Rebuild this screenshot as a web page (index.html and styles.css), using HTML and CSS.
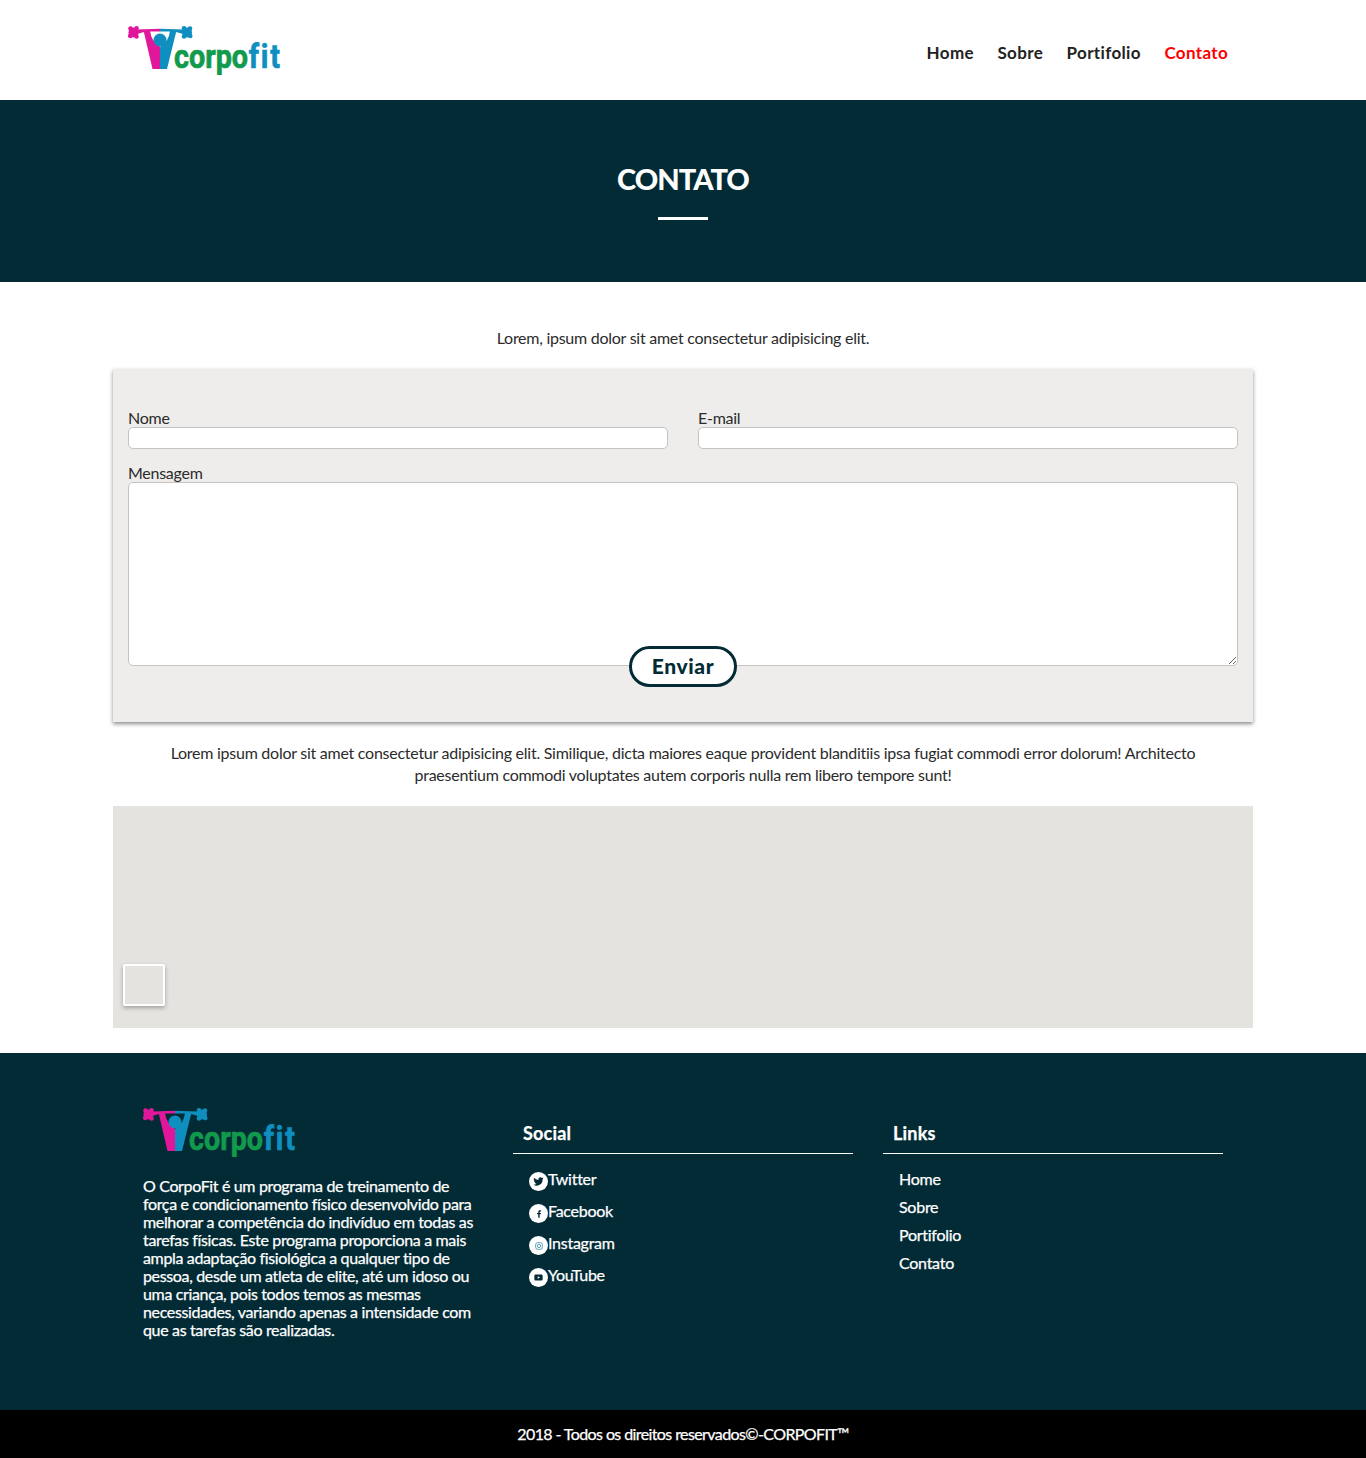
FILE: index.html
```html
<!DOCTYPE html>
<html lang="pt-BR">
<head>
    <meta charset="UTF-8">
    <meta name="viewport" content="width=device-width, initial-scale=1.0">
    <link rel="stylesheet" href="styles.css">
    <title>CorpoFit - Contato</title>
</head>
<body>
    <header class="topbar">
        <div class="topbar__inner">
            <svg class="logo" viewBox="0 0 170 50" width="170" height="50">
                <g class="logo__pink">
                    <circle cx="5.500" cy="7.500" r="5"/><circle cx="2.500" cy="3.500" r="2.300"/><circle cx="8.500" cy="3.300" r="2.300"/><circle cx="2.200" cy="11" r="2.300"/><circle cx="8.500" cy="11.500" r="2.300"/>
                    <path d="M9 4.500L32 3.800v2.700H22l-6 .5-7 2z"/>
                    <path d="M15.500 5.500h6.500q1 11 10.500 16.500v22h-8z"/>
                </g>
                <g class="logo__blue">
                    <circle cx="59" cy="7.500" r="5"/><circle cx="56" cy="3.300" r="2.300"/><circle cx="62" cy="3.500" r="2.300"/><circle cx="62.300" cy="11" r="2.300"/><circle cx="56" cy="11.500" r="2.300"/>
                    <path d="M55 4.500L32 3.800v2.700h10l6 .5 7 2z"/>
                    <path d="M48.500 5.500H42Q41 16.500 32 22v22h7z"/>
                    <circle cx="32" cy="15" r="6.500"/>
                </g>
                <g transform="translate(46 43) scale(.87 1)">
                    <text class="logo__text logo__green" x="0" y="0">corpo</text>
                    <text class="logo__text logo__fit logo__blue" x="86" y="0">fit</text>
                </g>
            </svg>
            <nav class="nav">
                <a href="#">Home</a>
                <a href="#">Sobre</a>
                <a href="#">Portifolio</a>
                <a href="#" class="nav__active">Contato</a>
            </nav>
        </div>
    </header>

    <section class="hero">
        <h1>CONTATO</h1>
        <div class="hero__line"></div>
    </section>

    <main class="container">
        <p class="intro">Lorem, ipsum dolor sit amet consectetur adipisicing elit.</p>

        <form class="contact">
            <div class="contact__row">
                <div class="field">
                    <label for="nome">Nome</label>
                    <input type="text" id="nome">
                </div>
                <div class="field">
                    <label for="email">E-mail</label>
                    <input type="email" id="email">
                </div>
            </div>
            <div class="field">
                <label for="mensagem">Mensagem</label>
                <textarea id="mensagem"></textarea>
            </div>
            <button type="button" class="send">Enviar</button>
        </form>

        <p class="outro">Lorem ipsum dolor sit amet consectetur adipisicing elit. Similique, dicta maiores eaque provident blanditiis ipsa fugiat commodi error dolorum! Architecto praesentium commodi voluptates autem corporis nulla rem libero tempore sunt!</p>

        <div class="map">
            <div class="map__control"></div>
        </div>
    </main>

    <footer class="footer">
        <div class="footer__inner">
            <div class="footer__col">
                <svg class="logo" viewBox="0 0 170 50" width="170" height="50">
                    <g class="logo__pink">
                        <circle cx="5.500" cy="7.500" r="5"/><circle cx="2.500" cy="3.500" r="2.300"/><circle cx="8.500" cy="3.300" r="2.300"/><circle cx="2.200" cy="11" r="2.300"/><circle cx="8.500" cy="11.500" r="2.300"/>
                        <path d="M9 4.500L32 3.800v2.700H22l-6 .5-7 2z"/>
                        <path d="M15.500 5.500h6.500q1 11 10.500 16.500v22h-8z"/>
                    </g>
                    <g class="logo__blue">
                        <circle cx="59" cy="7.500" r="5"/><circle cx="56" cy="3.300" r="2.300"/><circle cx="62" cy="3.500" r="2.300"/><circle cx="62.300" cy="11" r="2.300"/><circle cx="56" cy="11.500" r="2.300"/>
                        <path d="M55 4.500L32 3.800v2.700h10l6 .5 7 2z"/>
                        <path d="M48.500 5.500H42Q41 16.500 32 22v22h7z"/>
                        <circle cx="32" cy="15" r="6.500"/>
                    </g>
                    <g transform="translate(46 43) scale(.87 1)">
                        <text class="logo__text logo__green" x="0" y="0">corpo</text>
                        <text class="logo__text logo__fit logo__blue" x="86" y="0">fit</text>
                    </g>
                </svg>
                <p class="footer__about">O CorpoFit é um programa de treinamento de força e condicionamento físico desenvolvido para melhorar a competência do indivíduo em todas as tarefas físicas. Este programa proporciona a mais ampla adaptação fisiológica a qualquer tipo de pessoa, desde um atleta de elite, até um idoso ou uma criança, pois todos temos as mesmas necessidades, variando apenas a intensidade com que as tarefas são realizadas.</p>
            </div>
            <div class="footer__col">
                <h3>Social</h3>
                <ul class="social">
                    <li>
                        <span class="social__icon">
                            <svg viewBox="0 0 24 24" width="11" height="11"><path d="M23 5c-.8.400-1.700.600-2.600.700.900-.600 1.700-1.400 2-2.500-.900.500-1.900.900-2.900 1.100A4.600 4.600 0 0 0 11.700 8.500 13 13 0 0 1 2.300 3.700a4.600 4.600 0 0 0 1.400 6.100c-.700 0-1.400-.200-2-.600 0 2.200 1.500 4.100 3.600 4.600-.700.200-1.400.200-2 .100.600 1.800 2.300 3.100 4.300 3.200A9.300 9.300 0 0 1 .8 19a13 13 0 0 0 20-11.600C21.700 6.800 22.400 6 23 5z"/></svg>
                        </span>
                        <a href="#">Twitter</a>
                    </li>
                    <li>
                        <span class="social__icon">
                            <svg viewBox="0 0 24 24" width="8" height="8"><path d="M14 23v-10h3.500l.5-4h-4V6.500c0-1.200.4-2 2-2h2.200V1c-.4 0-1.700-.2-3.200-.2-3.100 0-5.200 1.900-5.200 5.400V9H6v4h3.800v10z"/></svg>
                        </span>
                        <a href="#">Facebook</a>
                    </li>
                    <li>
                        <span class="social__icon">
                            <svg viewBox="0 0 24 24" width="8" height="8" class="social__insta"><rect x="2" y="2" width="20" height="20" rx="6"/><circle cx="12" cy="12" r="5"/></svg>
                        </span>
                        <a href="#">Instagram</a>
                    </li>
                    <li>
                        <span class="social__icon">
                            <svg viewBox="0 0 24 24" width="9" height="9"><path d="M4 4h16a3 3 0 0 1 3 3v10a3 3 0 0 1-3 3H4a3 3 0 0 1-3-3V7a3 3 0 0 1 3-3zm6 4.500v7l6-3.500z"/></svg>
                        </span>
                        <a href="#">YouTube</a>
                    </li>
                </ul>
            </div>
            <div class="footer__col">
                <h3>Links</h3>
                <ul class="links">
                    <li><a href="#">Home</a></li>
                    <li><a href="#">Sobre</a></li>
                    <li><a href="#">Portifolio</a></li>
                    <li><a href="#">Contato</a></li>
                </ul>
            </div>
        </div>
    </footer>

    <div class="copyright">2018 - Todos os direitos reservados©-CORPOFIT™</div>
</body>
</html>
```

FILE: styles.css
```css
/* Base */
body {
    font-family: "Lato", "Noto Sans", sans-serif;
    background-color: #fff;
    margin: 0;
    padding: 0;
    color: #2b2b2b;
    font-size: 16px;
    line-height: 22px;
    letter-spacing: -0.26px;
}

a {
    color: inherit;
    text-decoration: none;
}

/* Topo */
.topbar {
    height: 100px;
}

.topbar__inner {
    width: 1110px;
    margin: 0 auto;
    height: 100%;
    display: flex;
    align-items: center;
    justify-content: space-between;
}

.logo {
    display: block;
    flex: none;
}

.topbar .logo {
    margin-top: -1px;
}

.logo__pink {
    fill: #e0179b;
}

.logo__blue {
    fill: #0f8fbf;
}

.logo__green {
    fill: #129a4c;
}

.logo__text {
    font-family: "Roboto", sans-serif;
    font-weight: 700;
    font-size: 33px;
    letter-spacing: 0;
    stroke-width: 0.7px;
}

.logo__text.logo__green {
    stroke: #129a4c;
}

.logo__text.logo__blue {
    stroke: #0f8fbf;
}

.logo__fit {
    letter-spacing: 2px;
}

.nav {
    display: flex;
    gap: 23.500px;
    padding-right: 10px;
    font-size: 17px;
    font-weight: 700;
    letter-spacing: 0.35px;
    color: #222;
    margin-top: 6px;
}

.nav__active {
    color: #f00;
}

/* Banner */
.hero {
    height: 182px;
    box-sizing: border-box;
    padding-top: 60px;
    background-color: #022b35;
    text-align: center;
}

.hero h1 {
    margin: 0;
    color: #fff;
    font-size: 29px;
    line-height: 38px;
    font-weight: 900;
    letter-spacing: -1px;
}

.hero__line {
    width: 50px;
    height: 3px;
    margin: 19px auto 0;
    background: #fff;
}

/* Conteudo */
.container {
    width: 1140px;
    margin: 0 auto;
    padding: 45px 0 25px;
}

.intro {
    margin: 0 0 20px;
    text-align: center;
}

.contact {
    background: #eeedeb;
    box-shadow: 0 2px 4px rgba(0, 0, 0, 0.45);
    padding: 40px 15px 35px;
}

.contact__row {
    display: flex;
    gap: 30px;
    margin-bottom: 15px;
}

.contact__row .field {
    flex: 1;
}

.field label {
    display: block;
    line-height: 18px;
}

.field input,
.field textarea {
    display: block;
    width: 100%;
    box-sizing: border-box;
    border: 1px solid #c4c4c4;
    border-radius: 5px;
    background: #fff;
    padding: 0;
    margin: 0;
}

.field input {
    height: 22px;
}

.field textarea {
    height: 184px;
}

.send {
    display: block;
    position: relative;
    width: 108px;
    height: 41px;
    margin: -20px auto 0;
    background: #fff;
    border: 3px solid #022b35;
    border-radius: 21px;
    color: #022b35;
    font-family: inherit;
    font-size: 21px;
    font-weight: 900;
    letter-spacing: 0.6px;
    padding: 0 0 2px;
}

.outro {
    margin: 20px 50px;
    text-align: center;
}

.map {
    height: 222px;
    background: #e5e3df;
    display: flex;
    align-items: flex-end;
    padding: 0 10px 22px;
    box-sizing: border-box;
}

.map__control {
    width: 42px;
    height: 42px;
    box-sizing: border-box;
    border: 2px solid #fff;
    border-radius: 2px;
    box-shadow: 0 2px 4px rgba(0, 0, 0, 0.3);
}

/* Rodape */
.footer {
    height: 357px;
    background-color: #022b35;
    color: #fff;
}

.footer__inner {
    width: 1110px;
    margin: 0 auto;
    padding-top: 54px;
    display: grid;
    grid-template-columns: repeat(3, 1fr);
}

.footer__col {
    padding: 0 15px;
}

.footer__about,
.footer h3,
.footer li {
    -webkit-text-stroke: 0.25px #fff;
}

.footer__about {
    margin: 20px 0 0;
    letter-spacing: -0.35px;
    line-height: 18px;
}

.footer h3 {
    margin: 15px 0 0;
    padding: 0 10px 9px;
    border-bottom: 1px solid #fff;
    font-size: 18px;
    line-height: 22px;
    font-weight: 700;
    letter-spacing: 0.2px;
}

.footer ul {
    list-style: none;
    margin: 0;
    padding: 14px 0 0 16px;
}

.social li {
    display: flex;
    height: 32px;
}

.social__icon {
    width: 19px;
    height: 19px;
    margin-top: 4px;
    border-radius: 50%;
    background: #fff;
    display: flex;
    align-items: center;
    justify-content: center;
    flex: none;
}

.social__icon svg {
    fill: #022b35;
    stroke: none;
}

.social__icon .social__insta {
    fill: none;
    stroke: #3d8fa8;
    stroke-width: 2.500;
}

.links li {
    height: 28px;
}

/* Direitos */
.copyright {
    height: 48px;
    background: #000;
    color: #fff;
    text-align: center;
    line-height: 48px;
    letter-spacing: -0.6px;
    -webkit-text-stroke: 0.25px #fff;
}
```
